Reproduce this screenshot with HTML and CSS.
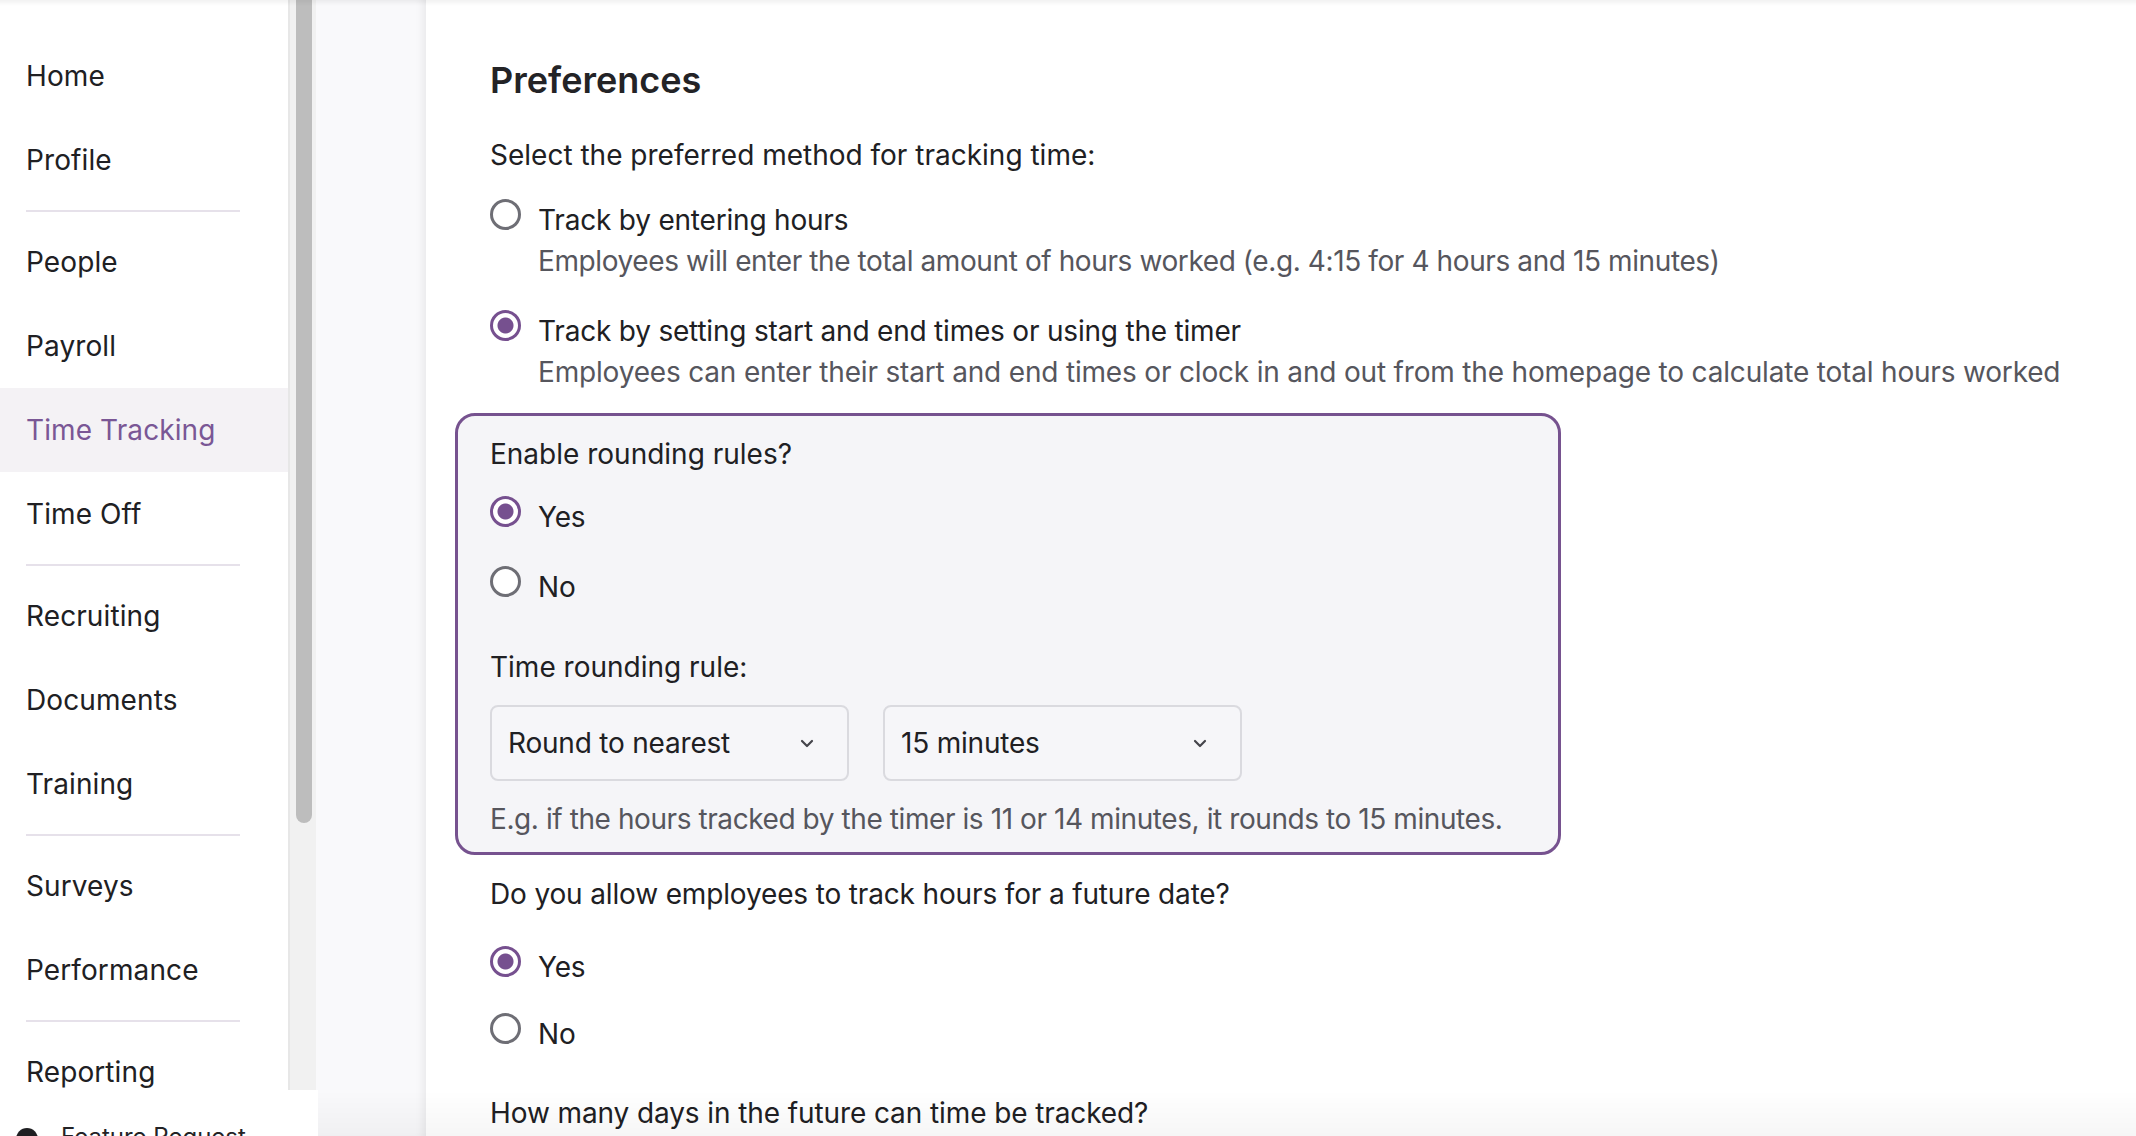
FILE: index.html
```html
<!DOCTYPE html>
<html lang="en">
<head>
<meta charset="utf-8">
<title>Time Tracking – Preferences</title>
<link rel="stylesheet" href="styles.css">
</head>
<body>
<div class="app">
  <nav class="sidebar">
    <ul class="nav">
      <li class="nav-item">Home</li>
      <li class="nav-item">Profile</li>
      <li class="nav-divider"></li>
      <li class="nav-item">People</li>
      <li class="nav-item">Payroll</li>
      <li class="nav-item active">Time Tracking</li>
      <li class="nav-item">Time Off</li>
      <li class="nav-divider"></li>
      <li class="nav-item">Recruiting</li>
      <li class="nav-item">Documents</li>
      <li class="nav-item">Training</li>
      <li class="nav-divider"></li>
      <li class="nav-item">Surveys</li>
      <li class="nav-item">Performance</li>
      <li class="nav-divider"></li>
      <li class="nav-item">Reporting</li>
    </ul>
  </nav>
  <div class="scrollbar"><div class="thumb"></div></div>
  <div class="gutter"></div>
  <main class="main">
    <h1 class="title">Preferences</h1>
    <p class="question q-first">Select the preferred method for tracking time:</p>

    <div class="option opt-1">
      <span class="radio"></span>
      <span class="option-text">
        <span class="option-label">Track by entering hours</span>
        <span class="option-desc desc-1">Employees will enter the total amount of hours worked (e.g. 4:15 for 4 hours and 15 minutes)</span>
      </span>
    </div>
    <div class="option opt-2">
      <span class="radio checked"></span>
      <span class="option-text">
        <span class="option-label">Track by setting start and end times or using the timer</span>
        <span class="option-desc">Employees can enter their start and end times or clock in and out from the homepage to calculate total hours worked</span>
      </span>
    </div>

    <div class="rounding-box">
      <p class="question">Enable rounding rules?</p>
      <div class="option yes-1">
        <span class="radio checked"></span>
        <span class="option-label">Yes</span>
      </div>
      <div class="option no-1">
        <span class="radio"></span>
        <span class="option-label">No</span>
      </div>
      <p class="question q-rule">Time rounding rule:</p>
      <div class="selects">
        <div class="select">
          <span>Round to nearest</span>
          <svg class="chev" width="14" height="9" viewBox="0 0 14 9"><polyline points="2,2 7,7 12,2" fill="none" stroke="#45454b" stroke-width="2.2" stroke-linecap="round" stroke-linejoin="round"/></svg>
        </div>
        <div class="select">
          <span>15 minutes</span>
          <svg class="chev" width="14" height="9" viewBox="0 0 14 9"><polyline points="2,2 7,7 12,2" fill="none" stroke="#45454b" stroke-width="2.2" stroke-linecap="round" stroke-linejoin="round"/></svg>
        </div>
      </div>
      <p class="hint">E.g. if the hours tracked by the timer is 11 or 14 minutes, it rounds to 15 minutes.</p>
    </div>

    <p class="question q-future">Do you allow employees to track hours for a future date?</p>
    <div class="option yes-2">
      <span class="radio checked"></span>
      <span class="option-label">Yes</span>
    </div>
    <div class="option no-2">
      <span class="radio"></span>
      <span class="option-label">No</span>
    </div>
    <p class="question q-days">How many days in the future can time be tracked?</p>
  </main>
</div>

<div class="feature-request">
  <span class="fr-icon"></span>
  <span class="fr-text">Feature Request</span>
</div>
<div class="top-shade"></div>
<div class="bottom-shade"></div>
</body>
</html>
```
FILE: styles.css
```css
* { box-sizing: border-box; }

body {
  margin: 0;
  font-family: Inter, "Noto Sans", sans-serif;
  color: #222226;
  background: #fff;
  overflow: hidden;
}

.app {
  display: flex;
  height: 1136px;
  overflow: hidden;
}

/* Sidebar */
.sidebar {
  width: 288px;
  flex: none;
  background: #fff;
  padding-top: 34px;
}
.nav { list-style: none; margin: 0; padding: 0; }
.nav-item {
  height: 84px;
  display: flex;
  align-items: center;
  padding-left: 26px;
  font-size: 28px;
  color: #202023;
  letter-spacing: 0.1px;
}
.nav-item.active {
  background: #f4f2f5;
  color: #7a5795;
}
.nav-divider {
  height: 2px;
  background: #e6e1ea;
  margin: 8px 48px 8px 26px;
}

/* Scrollbar */
.scrollbar {
  width: 28px;
  flex: none;
  background: #f1f1f1;
  border-left: 2px solid #e7e7e7;
  padding-left: 6px;
}
.thumb {
  width: 16px;
  height: 823px;
  background: #bdbdbd;
  border-radius: 0 0 8px 8px;
}

.gutter {
  width: 110px;
  flex: none;
  background: #f9f9fb;
  box-shadow: inset -9px 0 8px -6px rgba(0, 0, 0, 0.07);
}

/* Main */
.main {
  flex: 1;
  padding: 58px 0 0 64px;
  background: #fff;
}
.title {
  margin: 0;
  font-size: 36px;
  line-height: 44px;
  font-weight: 600;
  color: #232326;
}
.question {
  margin: 0;
  font-size: 28px;
  line-height: 40px;
  color: #202023;
}
.q-first { margin-top: 33px; }

.option {
  display: flex;
  align-items: flex-start;
  gap: 17px;
}
.opt-1 { margin-top: 24px; }
.opt-2 { margin-top: 29px; }
.option-text { display: flex; flex-direction: column; }
.option-label {
  font-size: 28px;
  line-height: 42px;
  color: #202023;
  letter-spacing: -0.2px;
}
.option-desc {
  font-size: 28px;
  line-height: 40px;
  color: #56565d;
  letter-spacing: -0.18px;
  white-space: nowrap;
}
.desc-1 { letter-spacing: -0.4px; }

.radio {
  width: 31px;
  height: 31px;
  flex: none;
  border-radius: 50%;
  border: 3px solid #6e6e75;
  background: #fff;
}
.radio.checked {
  border-color: #76508f;
  background: radial-gradient(circle, #76508f 0 7.5px, #fff 8.5px);
}

/* Rounding box */
.rounding-box {
  margin: 21px 0 0 -35px;
  width: 1106px;
  border: 3px solid #76528f;
  border-radius: 20px;
  background: #f5f5f8;
  padding: 18px 32px 13px;
}
.yes-1 { margin-top: 22px; }
.no-1 { margin-top: 28px; }
.q-rule { margin-top: 39px; }

.selects {
  display: flex;
  gap: 34px;
  margin-top: 18px;
}
.select {
  width: 359px;
  height: 76px;
  border: 2px solid #dadadf;
  border-radius: 8px;
  background: #f6f6f9;
  display: flex;
  align-items: center;
  justify-content: space-between;
  padding: 0 33px 0 16px;
  font-size: 28px;
  color: #202023;
  letter-spacing: -0.2px;
}
.chev { flex: none; }

.hint {
  margin: 18px 0 0;
  font-size: 28px;
  line-height: 40px;
  color: #56565d;
  letter-spacing: -0.42px;
  white-space: nowrap;
}

.q-future { margin-top: 19px; letter-spacing: -0.15px; }
.yes-2 { margin-top: 32px; }
.no-2 { margin-top: 25px; }
.q-days { margin-top: 38px; letter-spacing: -0.1px; }

/* Overlays */
.feature-request {
  position: fixed;
  left: 0;
  top: 1090px;
  width: 318px;
  height: 46px;
  background: #fff;
  display: flex;
  align-items: flex-start;
  gap: 23px;
  padding: 38px 0 0 16px;
  overflow: hidden;
}
.fr-icon {
  width: 22px;
  height: 22px;
  border-radius: 50%;
  background: #1f1f22;
  flex: none;
}
.fr-text {
  font-size: 24px;
  line-height: 24px;
  color: #232326;
  margin-top: -3px;
}

.top-shade {
  position: fixed;
  left: 0;
  right: 0;
  top: 0;
  height: 6px;
  background: linear-gradient(rgba(0, 0, 0, 0.05), rgba(0, 0, 0, 0));
  pointer-events: none;
}
.bottom-shade {
  position: fixed;
  left: 318px;
  right: 0;
  bottom: 0;
  height: 46px;
  background: linear-gradient(rgba(0, 0, 0, 0), rgba(0, 0, 0, 0.035));
  pointer-events: none;
}
```
